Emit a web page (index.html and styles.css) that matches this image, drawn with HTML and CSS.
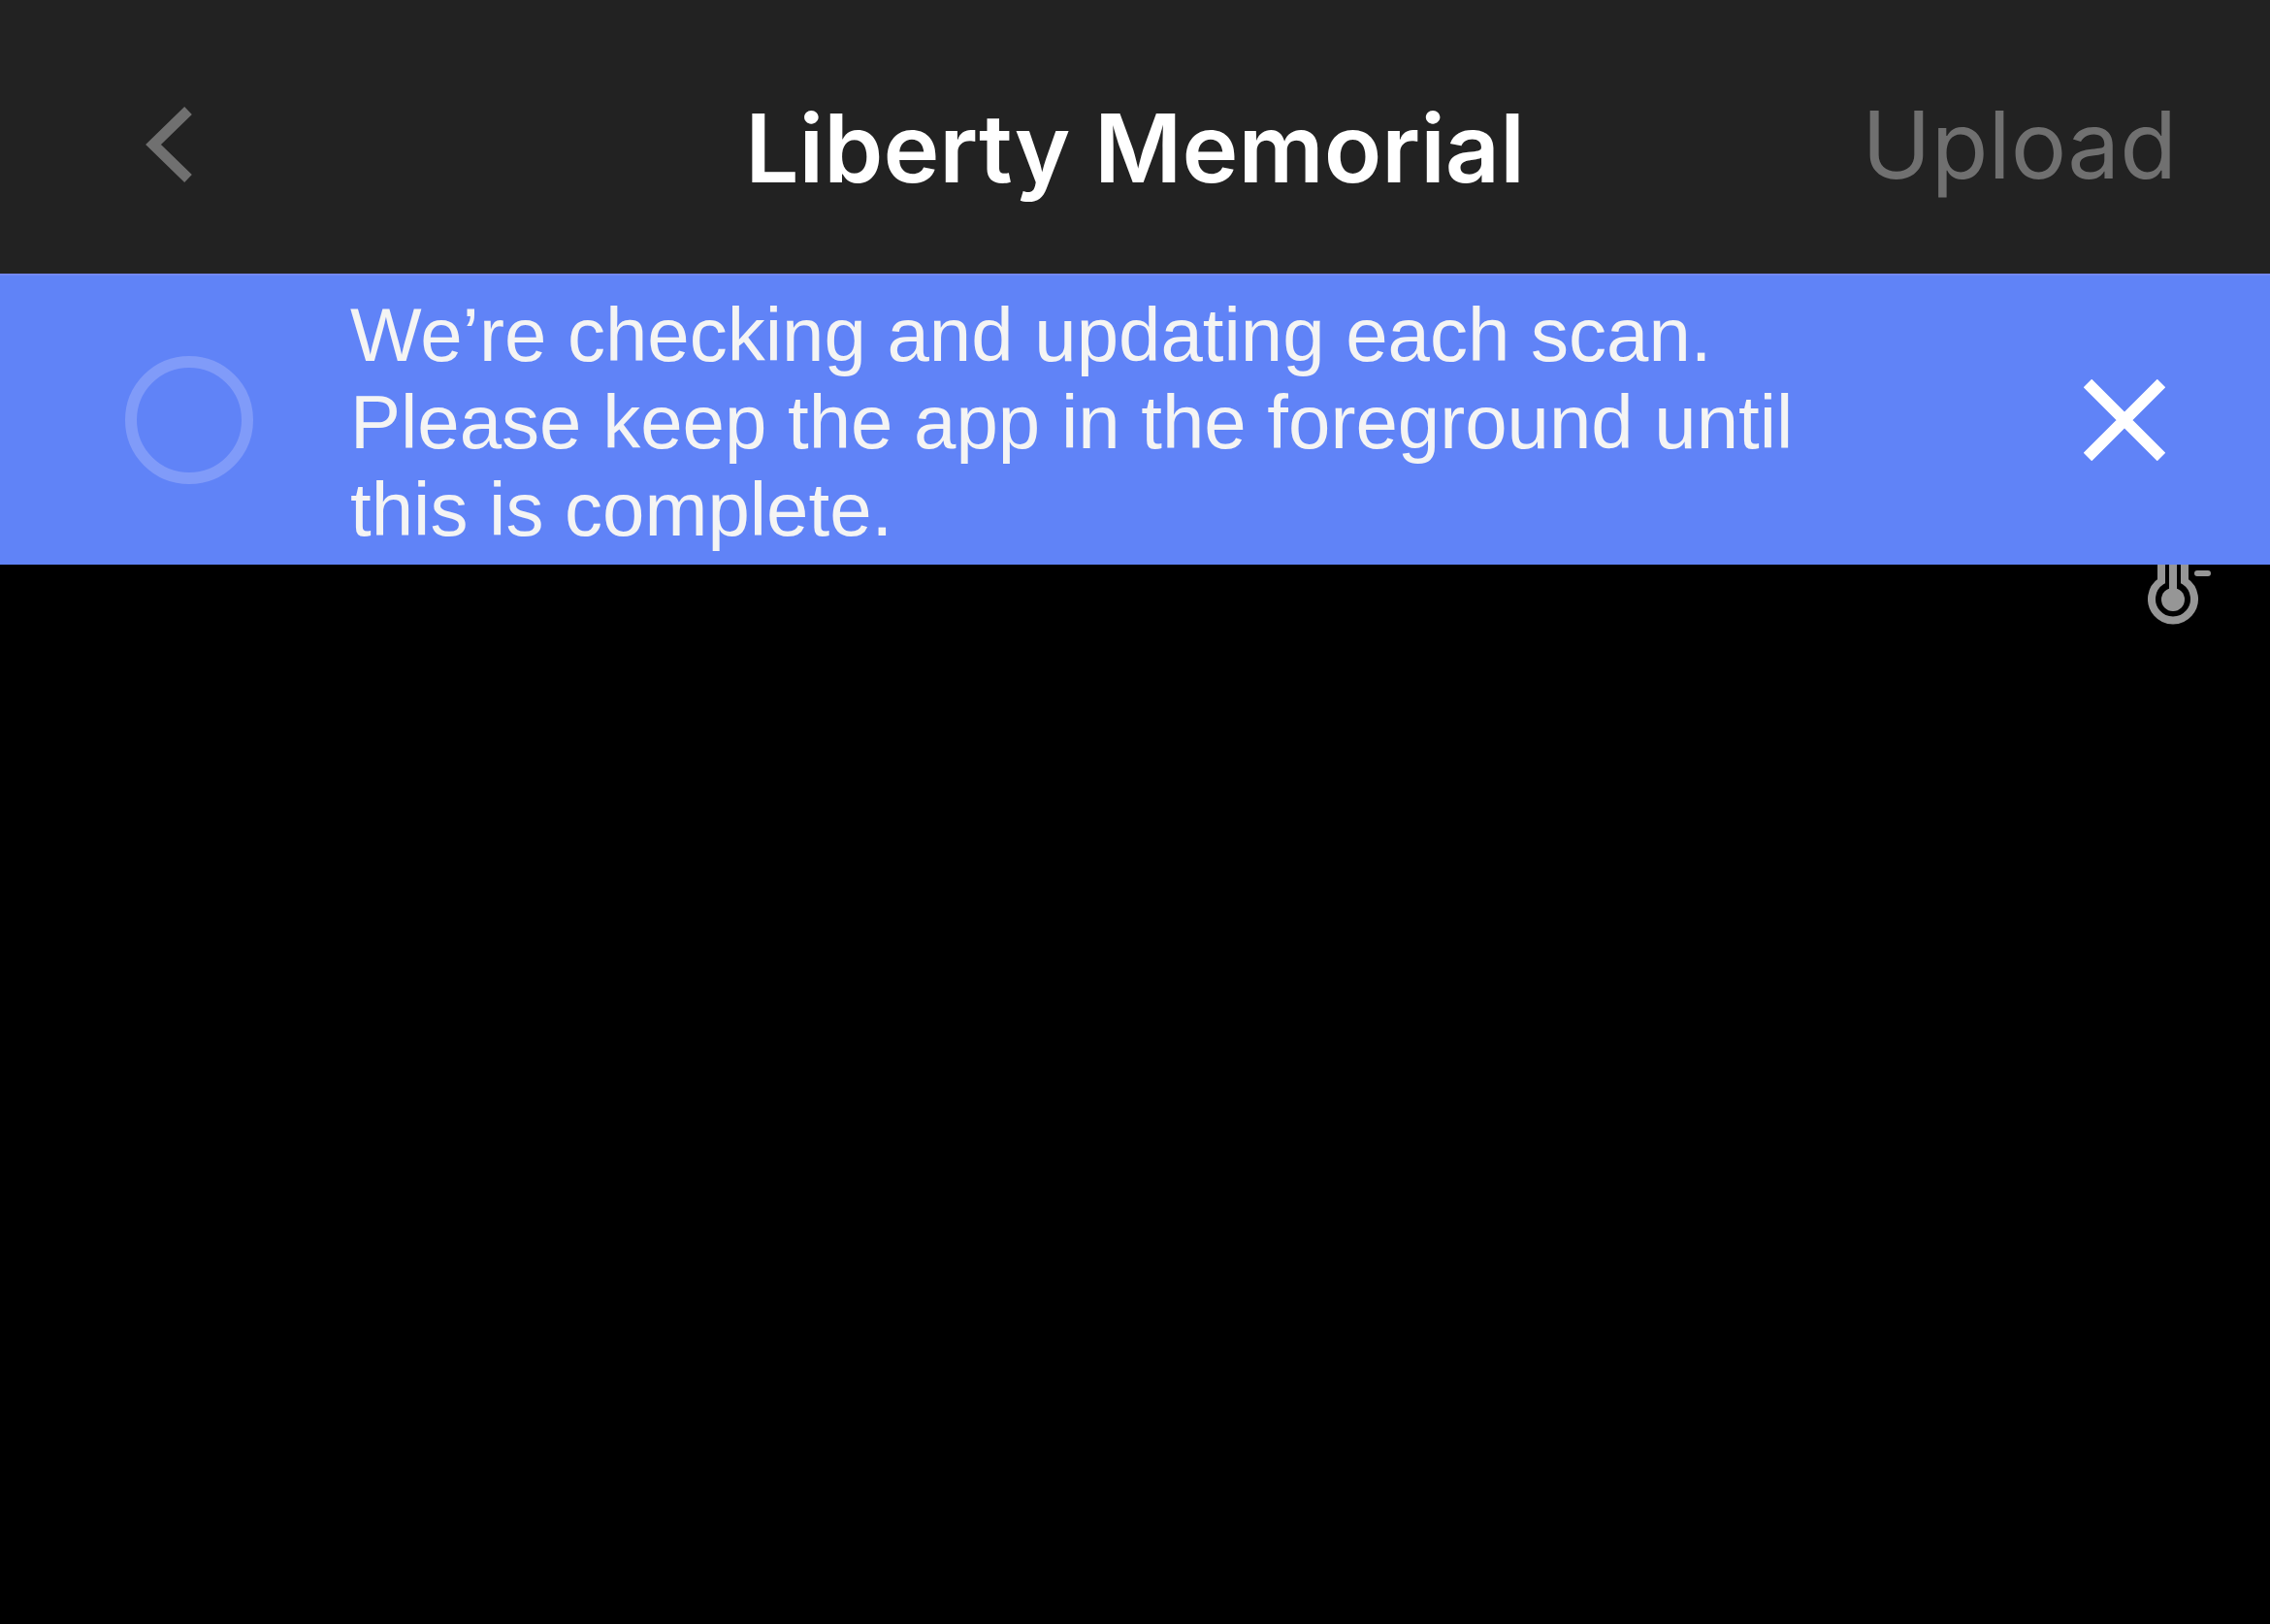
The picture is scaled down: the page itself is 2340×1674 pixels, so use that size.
FILE: index.html
```
<!DOCTYPE html>
<html lang="en">

<head>
    <meta charset="UTF-8">
    <meta name="viewport" content="width=device-width, initial-scale=1.0">
    <title>Liberty Memorial</title>
    <link rel="stylesheet" href="styles.css">
</head>

<body>
    <header class="navbar">
        <button class="back" type="button" aria-label="Back">
            <svg width="48" height="80" viewBox="0 0 48 80">
                <path d="M44 5L8 40l36 35" />
            </svg>
        </button>
        <h1>Liberty Memorial</h1>
        <button class="upload" type="button">Upload</button>
    </header>
    <div class="banner" role="status">
        <span class="progress"></span>
        <p>We’re checking and updating each scan. Please keep the app in the foreground until this is complete.</p>
        <button class="close" type="button" aria-label="Close">
            <svg width="84" height="84" viewBox="0 0 84 84">
                <path d="M4 4l76 76M80 4L4 80" />
            </svg>
        </button>
    </div>
    <main class="view">
        <!-- thermometer, its top is hidden under the banner -->
        <svg class="thermo" width="66" height="62" viewBox="0 0 66 62">
            <path class="line" d="M14 -4V17A22 22 0 1 0 38 17V-4" />
            <path class="line" d="M26 -4V36" />
            <circle cx="26" cy="36" r="12" />
            <path class="dash" d="M51 9h11" />
        </svg>
    </main>
</body>

</html>
```
FILE: styles.css
```
* {
    margin: 0;
    padding: 0;
    box-sizing: border-box;
}

body {
    min-height: 100vh;
    background-color: #000;
    font-family: Inter, "Liberation Sans", sans-serif;
}

button {
    border: none;
    background: none;
    font: inherit;
    cursor: pointer;
}

svg {
    display: block;
    fill: none;
}

.navbar {
    display: grid;
    grid-template-columns: 1fr auto 1fr;
    align-items: center;
    height: 282px;
    padding: 16px 96px 0 150px;
    background-color: #222;
    line-height: 120px;
}

.navbar h1 {
    margin-right: 54px;
    padding-top: 8px;
    font-size: 98px;
    font-weight: 600;
    color: #fff;
}

.back {
    justify-self: start;
}

.back path {
    stroke: #707070;
    stroke-width: 11;
}

.upload {
    justify-self: end;
    font-size: 96px;
    color: #707070;
}

.banner {
    display: flex;
    align-items: center;
    padding: 12px 108px 12px 129px;
    border-top: 2px solid #7388f2;
    background-color: #6083f7;
}

.progress {
    flex: none;
    width: 132px;
    height: 132px;
    border: 12px solid #809bf9;
    border-radius: 50%;
}

.banner p {
    flex: 1;
    margin: 0 188px 0 100px;
    padding-top: 4px;
    font-family: "Liberation Sans", Arial, sans-serif;
    font-size: 78px;
    line-height: 90px;
    color: #f4f4f4;
}

.close path {
    stroke: #fff;
    stroke-width: 12;
}

.view {
    display: flex;
    justify-content: flex-end;
    padding-right: 60px;
}

.thermo circle {
    fill: #969696;
}

.thermo .line {
    stroke: #969696;
    stroke-width: 8;
}

.thermo .dash {
    stroke: #969696;
    stroke-width: 6;
    stroke-linecap: round;
}
```
